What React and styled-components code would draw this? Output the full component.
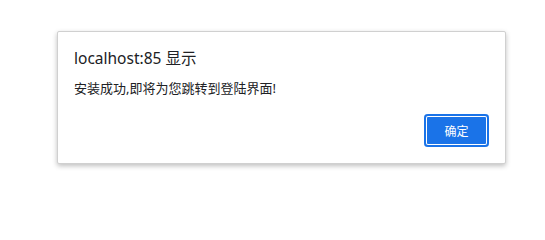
import React from "react";
import styled, { createGlobalStyle } from "styled-components";

const Global = createGlobalStyle`
  html, body { margin: 0; padding: 0; background: #ffffff; }
  body { font-family: "Noto Sans", "Noto Sans CJK SC", sans-serif; }
`;

const Page = styled.div`
  width: 545px;
  height: 200px;
  padding: 31px 0 0 57px;
  box-sizing: border-box;
`;

const Dialog = styled.div`
  width: 449px;
  height: 133px;
  box-sizing: border-box;
  padding: 16px 16px 16px 16px;
  background: #ffffff;
  border: 1px solid #d0d0d0;
  border-radius: 2px;
  box-shadow: 0 2px 5px rgba(0, 0, 0, 0.25);
  display: flex;
  flex-direction: column;
`;

const Title = styled.div`
  font-family: "Noto Sans", "Noto Sans CJK SC", sans-serif;
  font-size: 15.5px;
  line-height: 20px;
  color: #202124;
`;

const Message = styled.div`
  margin-top: 10px;
  font-family: "Noto Sans", "Noto Sans CJK SC", sans-serif;
  font-size: 13px;
  line-height: 20px;
  color: #202124;
`;

const Actions = styled.div`
  margin-top: auto;
  display: flex;
  justify-content: flex-end;
`;

const Button = styled.button`
  width: 65px;
  height: 33px;
  box-sizing: border-box;
  border: none;
  border-radius: 4px;
  background: #1a73e8;
  color: #ffffff;
  font-family: "Noto Sans CJK SC", sans-serif;
  font-size: 12px;
  box-shadow: inset 0 0 0 2px #1a73e8, inset 0 0 0 3px #ffffff;
  outline: none;
  cursor: pointer;
`;

export default function App() {
  return (
    <>
      <Global />
      <Page>
        <Dialog>
          <Title>localhost:85 显示</Title>
          <Message>安装成功,即将为您跳转到登陆界面!</Message>
          <Actions>
            <Button>确定</Button>
          </Actions>
        </Dialog>
      </Page>
    </>
  );
}
